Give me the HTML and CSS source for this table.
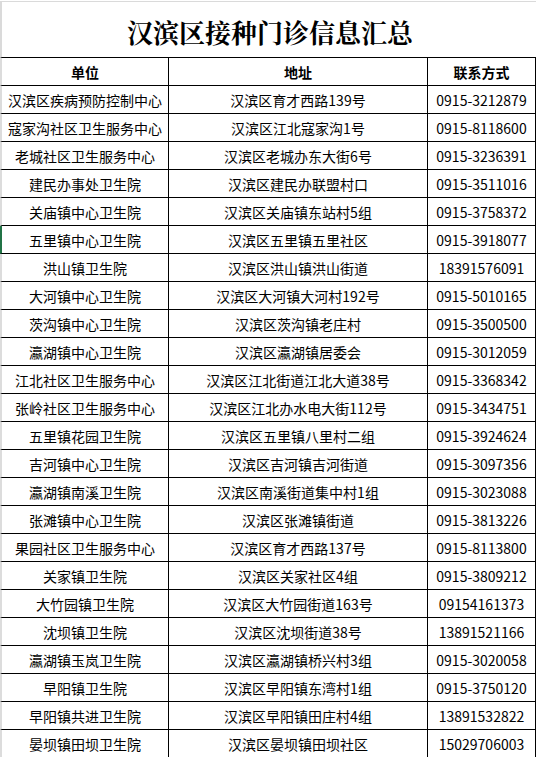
FILE: index.html
```html
<!DOCTYPE html>
<html lang="zh-CN">
<head>
<meta charset="utf-8">
<title>汉滨区接种门诊信息汇总</title>
<link rel="stylesheet" href="styles.css">
</head>
<body>
<div class="sheet">
  <div class="title">汉滨区接种门诊信息汇总</div>
  <div class="grid">
    <div class="cell head first">单位</div><div class="cell head">地址</div><div class="cell head">联系方式</div>
    <div class="cell first">汉滨区疾病预防控制中心</div><div class="cell">汉滨区育才西路139号</div><div class="cell">0915-3212879</div>
    <div class="cell first">寇家沟社区卫生服务中心</div><div class="cell">汉滨区江北寇家沟1号</div><div class="cell">0915-8118600</div>
    <div class="cell first">老城社区卫生服务中心</div><div class="cell">汉滨区老城办东大街6号</div><div class="cell">0915-3236391</div>
    <div class="cell first">建民办事处卫生院</div><div class="cell">汉滨区建民办联盟村口</div><div class="cell">0915-3511016</div>
    <div class="cell first">关庙镇中心卫生院</div><div class="cell">汉滨区关庙镇东站村5组</div><div class="cell">0915-3758372</div>
    <div class="cell first selected">五里镇中心卫生院</div><div class="cell">汉滨区五里镇五里社区</div><div class="cell">0915-3918077</div>
    <div class="cell first">洪山镇卫生院</div><div class="cell">汉滨区洪山镇洪山街道</div><div class="cell">18391576091</div>
    <div class="cell first">大河镇中心卫生院</div><div class="cell">汉滨区大河镇大河村192号</div><div class="cell">0915-5010165</div>
    <div class="cell first">茨沟镇中心卫生院</div><div class="cell">汉滨区茨沟镇老庄村</div><div class="cell">0915-3500500</div>
    <div class="cell first">瀛湖镇中心卫生院</div><div class="cell">汉滨区瀛湖镇居委会</div><div class="cell">0915-3012059</div>
    <div class="cell first">江北社区卫生服务中心</div><div class="cell">汉滨区江北街道江北大道38号</div><div class="cell">0915-3368342</div>
    <div class="cell first">张岭社区卫生服务中心</div><div class="cell">汉滨区江北办水电大街112号</div><div class="cell">0915-3434751</div>
    <div class="cell first">五里镇花园卫生院</div><div class="cell">汉滨区五里镇八里村二组</div><div class="cell">0915-3924624</div>
    <div class="cell first">吉河镇中心卫生院</div><div class="cell">汉滨区吉河镇吉河街道</div><div class="cell">0915-3097356</div>
    <div class="cell first">瀛湖镇南溪卫生院</div><div class="cell">汉滨区南溪街道集中村1组</div><div class="cell">0915-3023088</div>
    <div class="cell first">张滩镇中心卫生院</div><div class="cell">汉滨区张滩镇街道</div><div class="cell">0915-3813226</div>
    <div class="cell first">果园社区卫生服务中心</div><div class="cell">汉滨区育才西路137号</div><div class="cell">0915-8113800</div>
    <div class="cell first">关家镇卫生院</div><div class="cell">汉滨区关家社区4组</div><div class="cell">0915-3809212</div>
    <div class="cell first">大竹园镇卫生院</div><div class="cell">汉滨区大竹园街道163号</div><div class="cell">09154161373</div>
    <div class="cell first">沈坝镇卫生院</div><div class="cell">汉滨区沈坝街道38号</div><div class="cell">13891521166</div>
    <div class="cell first">瀛湖镇玉岚卫生院</div><div class="cell">汉滨区瀛湖镇桥兴村3组</div><div class="cell">0915-3020058</div>
    <div class="cell first">早阳镇卫生院</div><div class="cell">汉滨区早阳镇东湾村1组</div><div class="cell">0915-3750120</div>
    <div class="cell first">早阳镇共进卫生院</div><div class="cell">汉滨区早阳镇田庄村4组</div><div class="cell">13891532822</div>
    <div class="cell first">晏坝镇田坝卫生院</div><div class="cell">汉滨区晏坝镇田坝社区</div><div class="cell">15029706003</div>
  </div>
</div>
</body>
</html>
```

FILE: styles.css
```css
html, body {
  margin: 0;
  padding: 0;
  background: #ffffff;
}

.sheet {
  width: 536px;
  height: 757px;
  overflow: hidden;
  padding-top: 1px;
  box-sizing: border-box;
  background: #ffffff;
  font-family: "Noto Sans CJK SC", "Microsoft YaHei", sans-serif;
  color: #000000;
}

.title {
  height: 56px;
  box-sizing: border-box;
  border-top: 1px solid #dadada;
  border-left: 2px solid #dadada;
  display: flex;
  align-items: center;
  justify-content: center;
  padding-top: 4px;
  font-family: "Noto Serif CJK SC", "Noto Serif CJK", "Liberation Serif", "Noto Sans CJK SC", serif;
  font-weight: 700;
  font-size: 26px;
  line-height: 1;
  padding-left: 2px;
}

.grid {
  display: grid;
  grid-template-columns: 169px 259px 108px;
  grid-auto-rows: 28px;
}

.cell {
  box-sizing: border-box;
  border-right: 1px solid #000000;
  border-bottom: 1px solid #000000;
  display: flex;
  align-items: center;
  justify-content: center;
  font-size: 14px;
  line-height: 1;
  white-space: nowrap;
  overflow: hidden;
}

.cell.head {
  height: 29px;
  border-top: 1px solid #000000;
  font-weight: 700;
}

.grid > .head {
  grid-row: 1;
}

.grid {
  grid-template-rows: 29px;
}

.cell.first {
  border-left: 2px solid #dcdcdc;
}

.cell.first.selected {
  border-left: 2px solid #217346;
}
```
